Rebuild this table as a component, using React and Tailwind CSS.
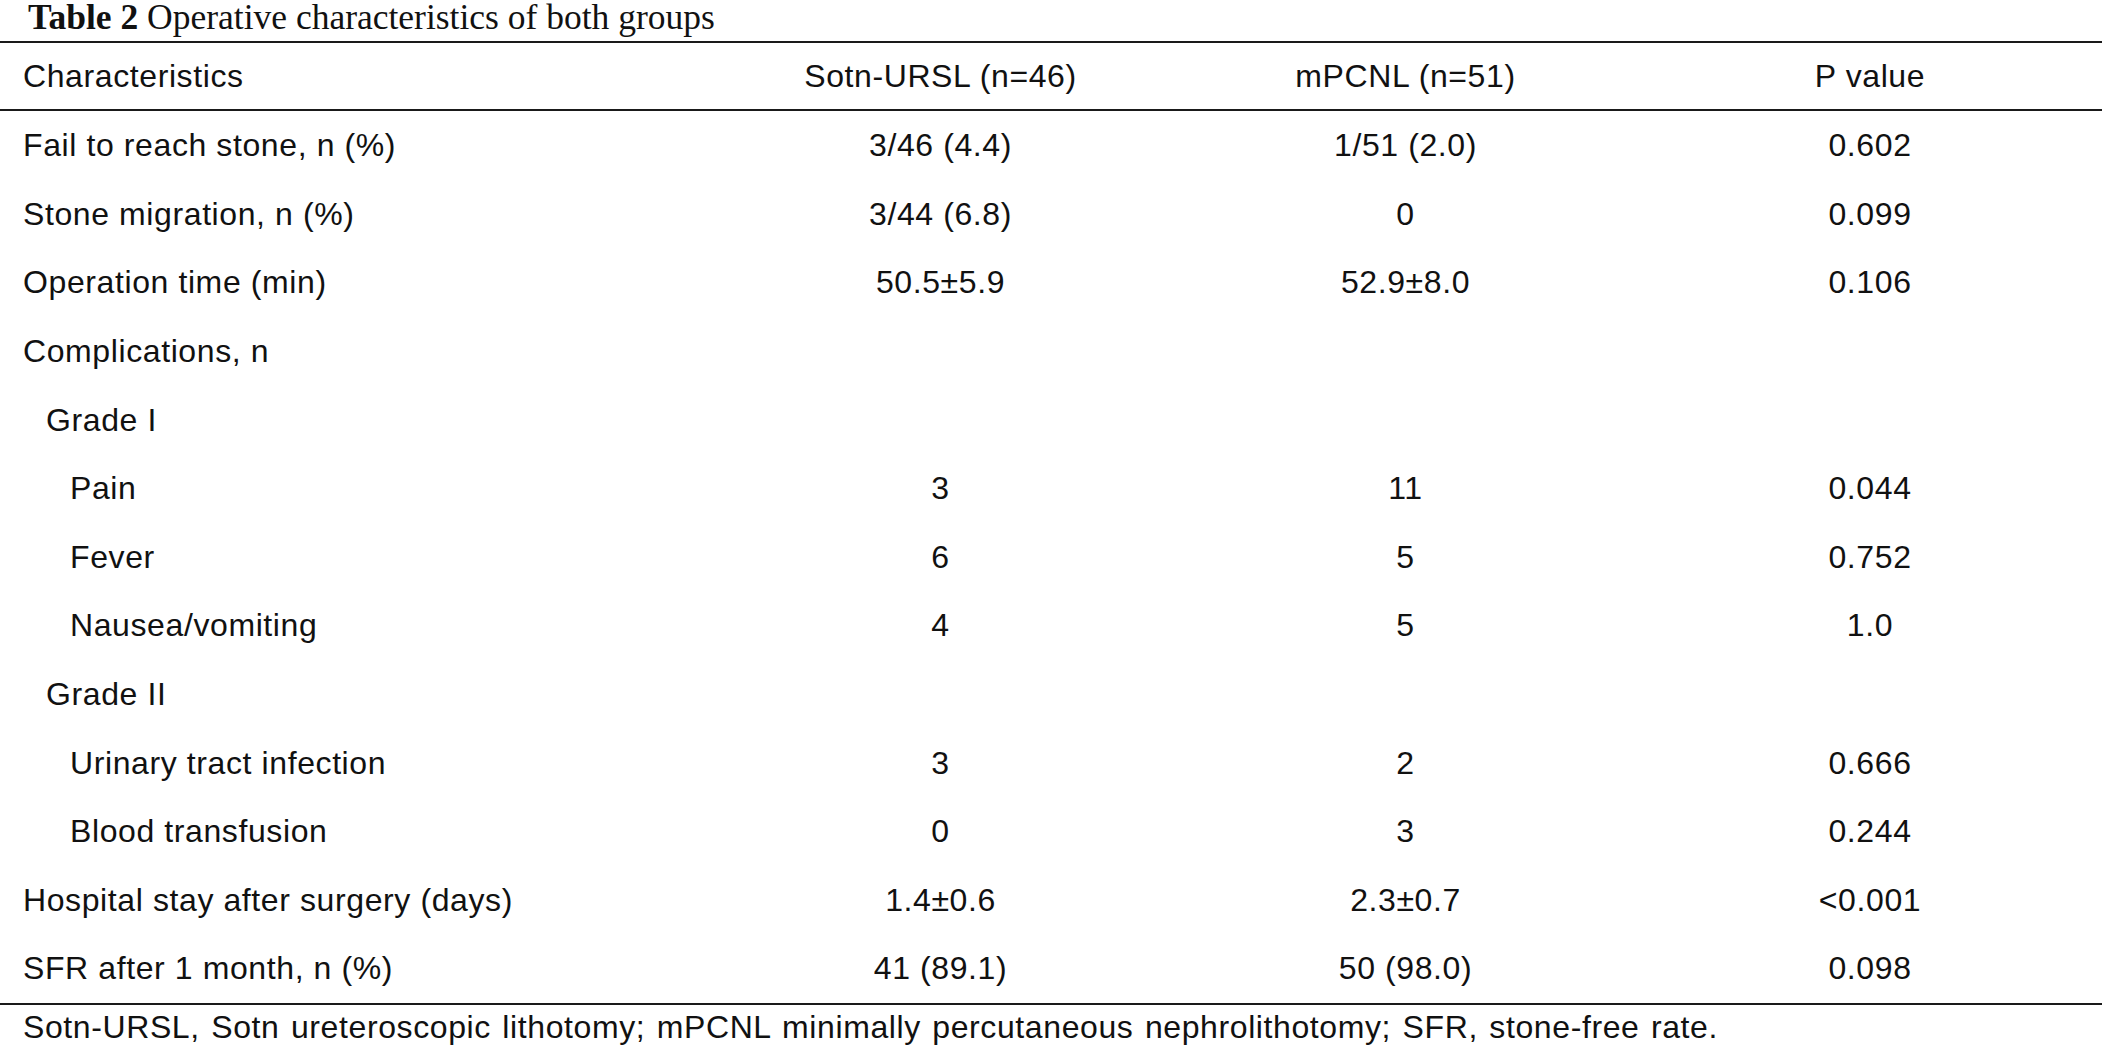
import React from 'react'

const rows = [
  { label: 'Fail to reach stone, n (%)', level: 0, values: ['3/46 (4.4)', '1/51 (2.0)', '0.602'] },
  { label: 'Stone migration, n (%)', level: 0, values: ['3/44 (6.8)', '0', '0.099'] },
  { label: 'Operation time (min)', level: 0, values: ['50.5±5.9', '52.9±8.0', '0.106'] },
  { label: 'Complications, n', level: 0, values: ['', '', ''] },
  { label: 'Grade I', level: 1, values: ['', '', ''] },
  { label: 'Pain', level: 2, values: ['3', '11', '0.044'] },
  { label: 'Fever', level: 2, values: ['6', '5', '0.752'] },
  { label: 'Nausea/vomiting', level: 2, values: ['4', '5', '1.0'] },
  { label: 'Grade II', level: 1, values: ['', '', ''] },
  { label: 'Urinary tract infection', level: 2, values: ['3', '2', '0.666'] },
  { label: 'Blood transfusion', level: 2, values: ['0', '3', '0.244'] },
  { label: 'Hospital stay after surgery (days)', level: 0, values: ['1.4±0.6', '2.3±0.7', '<0.001'] },
  { label: 'SFR after 1 month, n (%)', level: 0, values: ['41 (89.1)', '50 (98.0)', '0.098'] },
]

// indentation per nesting level, written out so Tailwind picks them up
const indent = ['pl-[23px]', 'pl-[46px]', 'pl-[70px]']

function Rule() {
  return <div className="h-[2px] w-full bg-[#1a1a1a]" />
}

function Row({ label, level, values }) {
  return (
    <div className="grid grid-cols-[708px_465px_465px_1fr] h-[68.6px] items-center">
      <div className={indent[level] + ' whitespace-nowrap'}>{label}</div>
      {values.map((v, i) => (
        <div key={i} className="text-center whitespace-nowrap">{v}</div>
      ))}
    </div>
  )
}

export default function App() {
  return (
    <div className="w-[2102px] h-[1053px] overflow-hidden bg-white text-[#111] font-['Liberation_Sans',Arial,sans-serif] text-[32px] leading-[36px] tracking-[0.6px]">
      {/* caption */}
      <div className="h-[41px] pl-[28px] font-['Liberation_Serif','Times_New_Roman',serif] text-[35.5px] leading-[34px] tracking-normal whitespace-nowrap">
        <span className="font-bold">Table 2</span> Operative characteristics of both groups
      </div>
      <Rule />

      {/* header */}
      <div className="grid grid-cols-[708px_465px_465px_1fr] h-[66px] items-center">
        <div className="pl-[23px]">Characteristics</div>
        <div className="text-center">Sotn-URSL (n=46)</div>
        <div className="text-center">mPCNL (n=51)</div>
        <div className="text-center">P value</div>
      </div>
      <Rule />

      {/* body */}
      <div className="flex flex-col">
        {rows.map((r, i) => (
          <Row key={i} {...r} />
        ))}
      </div>
      <Rule />

      {/* footnote */}
      <div className="pl-[23px] pt-[4px] whitespace-nowrap [word-spacing:2px]">
        Sotn-URSL, Sotn ureteroscopic lithotomy; mPCNL minimally percutaneous nephrolithotomy; SFR, stone-free rate.
      </div>
    </div>
  )
}
